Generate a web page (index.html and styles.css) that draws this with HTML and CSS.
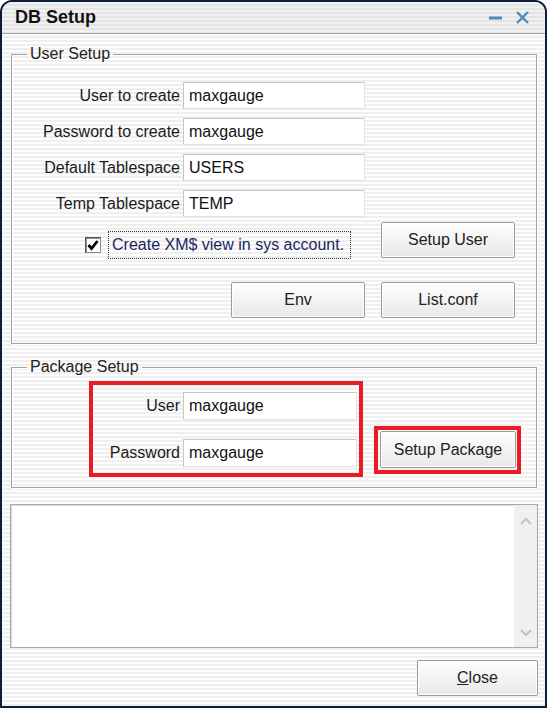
FILE: index.html
```html
<!DOCTYPE html>
<html>
<head>
<meta charset="utf-8">
<link rel="stylesheet" href="styles.css">
</head>
<body>
<div class="window">
  <div class="titlebar">
    <span class="title">DB Setup</span>
    <div class="controls">
      <svg class="ico-min" width="13" height="12" viewBox="0 0 13 12"><line x1="0" y1="6" x2="13" y2="6" stroke="#5289b5" stroke-width="3"/></svg>
      <svg class="ico-close" width="13" height="13" viewBox="0 0 13 13"><path d="M1 1 L12 12 M12 1 L1 12" stroke="#5289b5" stroke-width="2.4" fill="none"/></svg>
    </div>
  </div>
  <div class="content">
    <fieldset class="group user-group">
      <legend class="legend">User Setup</legend>
      <div class="form-grid">
        <label class="lbl">User to create</label>
        <input class="field" type="text" value="maxgauge">
        <label class="lbl">Password to create</label>
        <input class="field" type="text" value="maxgauge">
        <label class="lbl">Default Tablespace</label>
        <input class="field" type="text" value="USERS">
        <label class="lbl">Temp Tablespace</label>
        <input class="field" type="text" value="TEMP">
      </div>
      <div class="check-row">
        <div class="check-group">
          <span class="checkbox">
            <svg width="12" height="12" viewBox="0 0 12 12"><path d="M1.5 6 L4.5 9.5 L10.5 2" stroke="#000" stroke-width="2.8" fill="none"/></svg>
          </span>
          <span class="focus-label">Create XM$ view in sys account.</span>
        </div>
        <button class="btn btn-wide">Setup User</button>
      </div>
      <div class="btn-row">
        <button class="btn btn-wide">Env</button>
        <button class="btn btn-wide">List.conf</button>
      </div>
    </fieldset>

    <fieldset class="group pkg-group">
      <legend class="legend">Package Setup</legend>
      <div class="pkg-row">
        <div class="mark mark-fields">
          <div class="pkg-grid">
            <label class="lbl">User</label>
            <input class="field field-pkg" type="text" value="maxgauge">
            <label class="lbl">Password</label>
            <input class="field field-pkg" type="text" value="maxgauge">
          </div>
        </div>
        <div class="mark mark-btn">
          <button class="btn btn-pkg">Setup Package</button>
        </div>
      </div>
    </fieldset>

    <div class="log">
      <div class="log-body"></div>
      <div class="scrollbar">
        <svg width="12" height="8" viewBox="0 0 12 8"><polyline points="1,7 6,2 11,7" stroke="#c2c2c2" stroke-width="2" fill="none"/></svg>
        <svg width="12" height="8" viewBox="0 0 12 8"><polyline points="1,1 6,6 11,1" stroke="#c2c2c2" stroke-width="2" fill="none"/></svg>
      </div>
    </div>

    <div class="footer">
      <button class="btn btn-close"><span class="ul">C</span>lose</button>
    </div>
  </div>
</div>
</body>
</html>
```

FILE: styles.css
```css
html, body {
  margin: 0;
  padding: 0;
  background: #ffffff;
}

.window {
  width: 547px;
  height: 708px;
  box-sizing: border-box;
  border: 2px solid #0c1d3d;
  border-radius: 12px 12px 0 0;
  overflow: hidden;
  background: repeating-linear-gradient(to bottom, #fdfdfd 0px, #fdfdfd 2px, #efefef 2px, #efefef 4px);
  font-family: "Liberation Sans", Arial, sans-serif;
  font-size: 16px;
  color: #1a1a1a;
}

.titlebar {
  height: 31px;
  border-bottom: 1px solid #a6a6a6;
  display: flex;
  align-items: center;
  padding: 0 16px 0 13px;
  background: repeating-linear-gradient(to bottom, #f1f1f1 0px, #f1f1f1 2px, #e4e4e4 2px, #e4e4e4 4px);
}

.title {
  font-weight: bold;
  font-size: 18px;
  color: #111111;
}

.controls {
  margin-left: auto;
  display: flex;
  align-items: center;
  gap: 14px;
}

.ico-min, .ico-close {
  display: block;
}

.content {
  padding: 0 8px 0 9px;
}

.group {
  margin: 0;
  border: 1px solid #a3a3a3;
  box-shadow: inset 1px 1px 0 #ffffff, 1px 1px 0 #ffffff;
  min-inline-size: 0;
}

.legend {
  margin-left: 15px;
  padding: 0 3px;
  line-height: 18px;
  font-size: 16px;
  color: #222222;
}

.user-group {
  margin-top: 11px;
  padding: 19px 21px 25px 0;
}

.form-grid {
  display: grid;
  grid-template-columns: 168px 182px;
  column-gap: 3px;
  row-gap: 9px;
}

.lbl {
  text-align: right;
  align-self: center;
  white-space: nowrap;
  color: #1a1a1a;
}

.field {
  box-sizing: border-box;
  height: 27px;
  margin: 0;
  padding: 0 0 0 5px;
  border: 1px solid #c7c7c7;
  border-right-color: #e2e2e2;
  border-bottom-color: #e2e2e2;
  background: #ffffff;
  font-family: "Liberation Sans", Arial, sans-serif;
  font-size: 16px;
  color: #111111;
  outline: none;
  width: 100%;
}

.check-row {
  margin-top: 5px;
  display: flex;
  align-items: flex-start;
}

.check-group {
  margin-top: 9px;
  margin-left: 73px;
  height: 28px;
  display: flex;
  align-items: center;
  gap: 7px;
}

.checkbox {
  box-sizing: border-box;
  width: 16px;
  height: 16px;
  border: 1px solid #8a8a8a;
  border-top-color: #555555;
  border-left-color: #555555;
  box-shadow: inset 1px 1px 0 #8c8c8c;
  background: #ffffff;
  display: flex;
  align-items: center;
  justify-content: center;
}

.checkbox svg {
  display: block;
}

.focus-label {
  box-sizing: border-box;
  width: 243px;
  height: 28px;
  border: 1px dotted #333333;
  padding-left: 3px;
  line-height: 26px;
  color: #1b2660;
  white-space: nowrap;
}

.btn {
  box-sizing: border-box;
  height: 36px;
  margin: 0;
  padding: 0;
  border: 1px solid #9b9b9b;
  border-radius: 2px;
  background: linear-gradient(to bottom, #fefefe, #e8e8e8);
  box-shadow: inset 0 0 0 1px #ffffff;
  font-family: "Liberation Sans", Arial, sans-serif;
  font-size: 16px;
  color: #222222;
}

.btn-wide {
  width: 134px;
}

.check-row .btn-wide {
  margin-left: auto;
}

.btn-row {
  margin-top: 23px;
  display: flex;
  justify-content: flex-end;
  gap: 16px;
}

.pkg-group {
  margin-top: 14px;
  padding: 5px 0 10px 0;
}

.pkg-row {
  display: flex;
  align-items: flex-start;
  gap: 11px;
  margin-left: 77px;
}

.mark {
  border: 4px solid #e81c24;
}

.mark-fields {
  width: 274px;
  box-sizing: border-box;
  padding: 7px 2px 6px 0;
}

.pkg-grid {
  display: grid;
  grid-template-columns: 87px 174px;
  column-gap: 3px;
  row-gap: 19px;
}

.field-pkg {
  height: 28px;
}

.mark-btn {
  margin-top: 45px;
  padding: 1px 1px 2px 2px;
}

.btn-pkg {
  width: 136px;
  height: 37px;
  display: block;
}

.log {
  margin: 16px -1px 0 -1px;
  height: 144px;
  box-sizing: border-box;
  border: 1px solid #a9a9a9;
  box-shadow: inset 1px 1px 0 #d9d9d9;
  background: #ffffff;
  display: flex;
}

.log-body {
  flex: 1;
}

.scrollbar {
  width: 23px;
  background: #f0f0f0;
  display: flex;
  flex-direction: column;
  justify-content: space-between;
  align-items: center;
  padding: 12px 0 10px 0;
}

.scrollbar svg {
  display: block;
}

.footer {
  margin-top: 12px;
  margin-right: -1px;
  display: flex;
  justify-content: flex-end;
}

.btn-close {
  width: 121px;
}

.ul {
  text-decoration: underline;
}
```
